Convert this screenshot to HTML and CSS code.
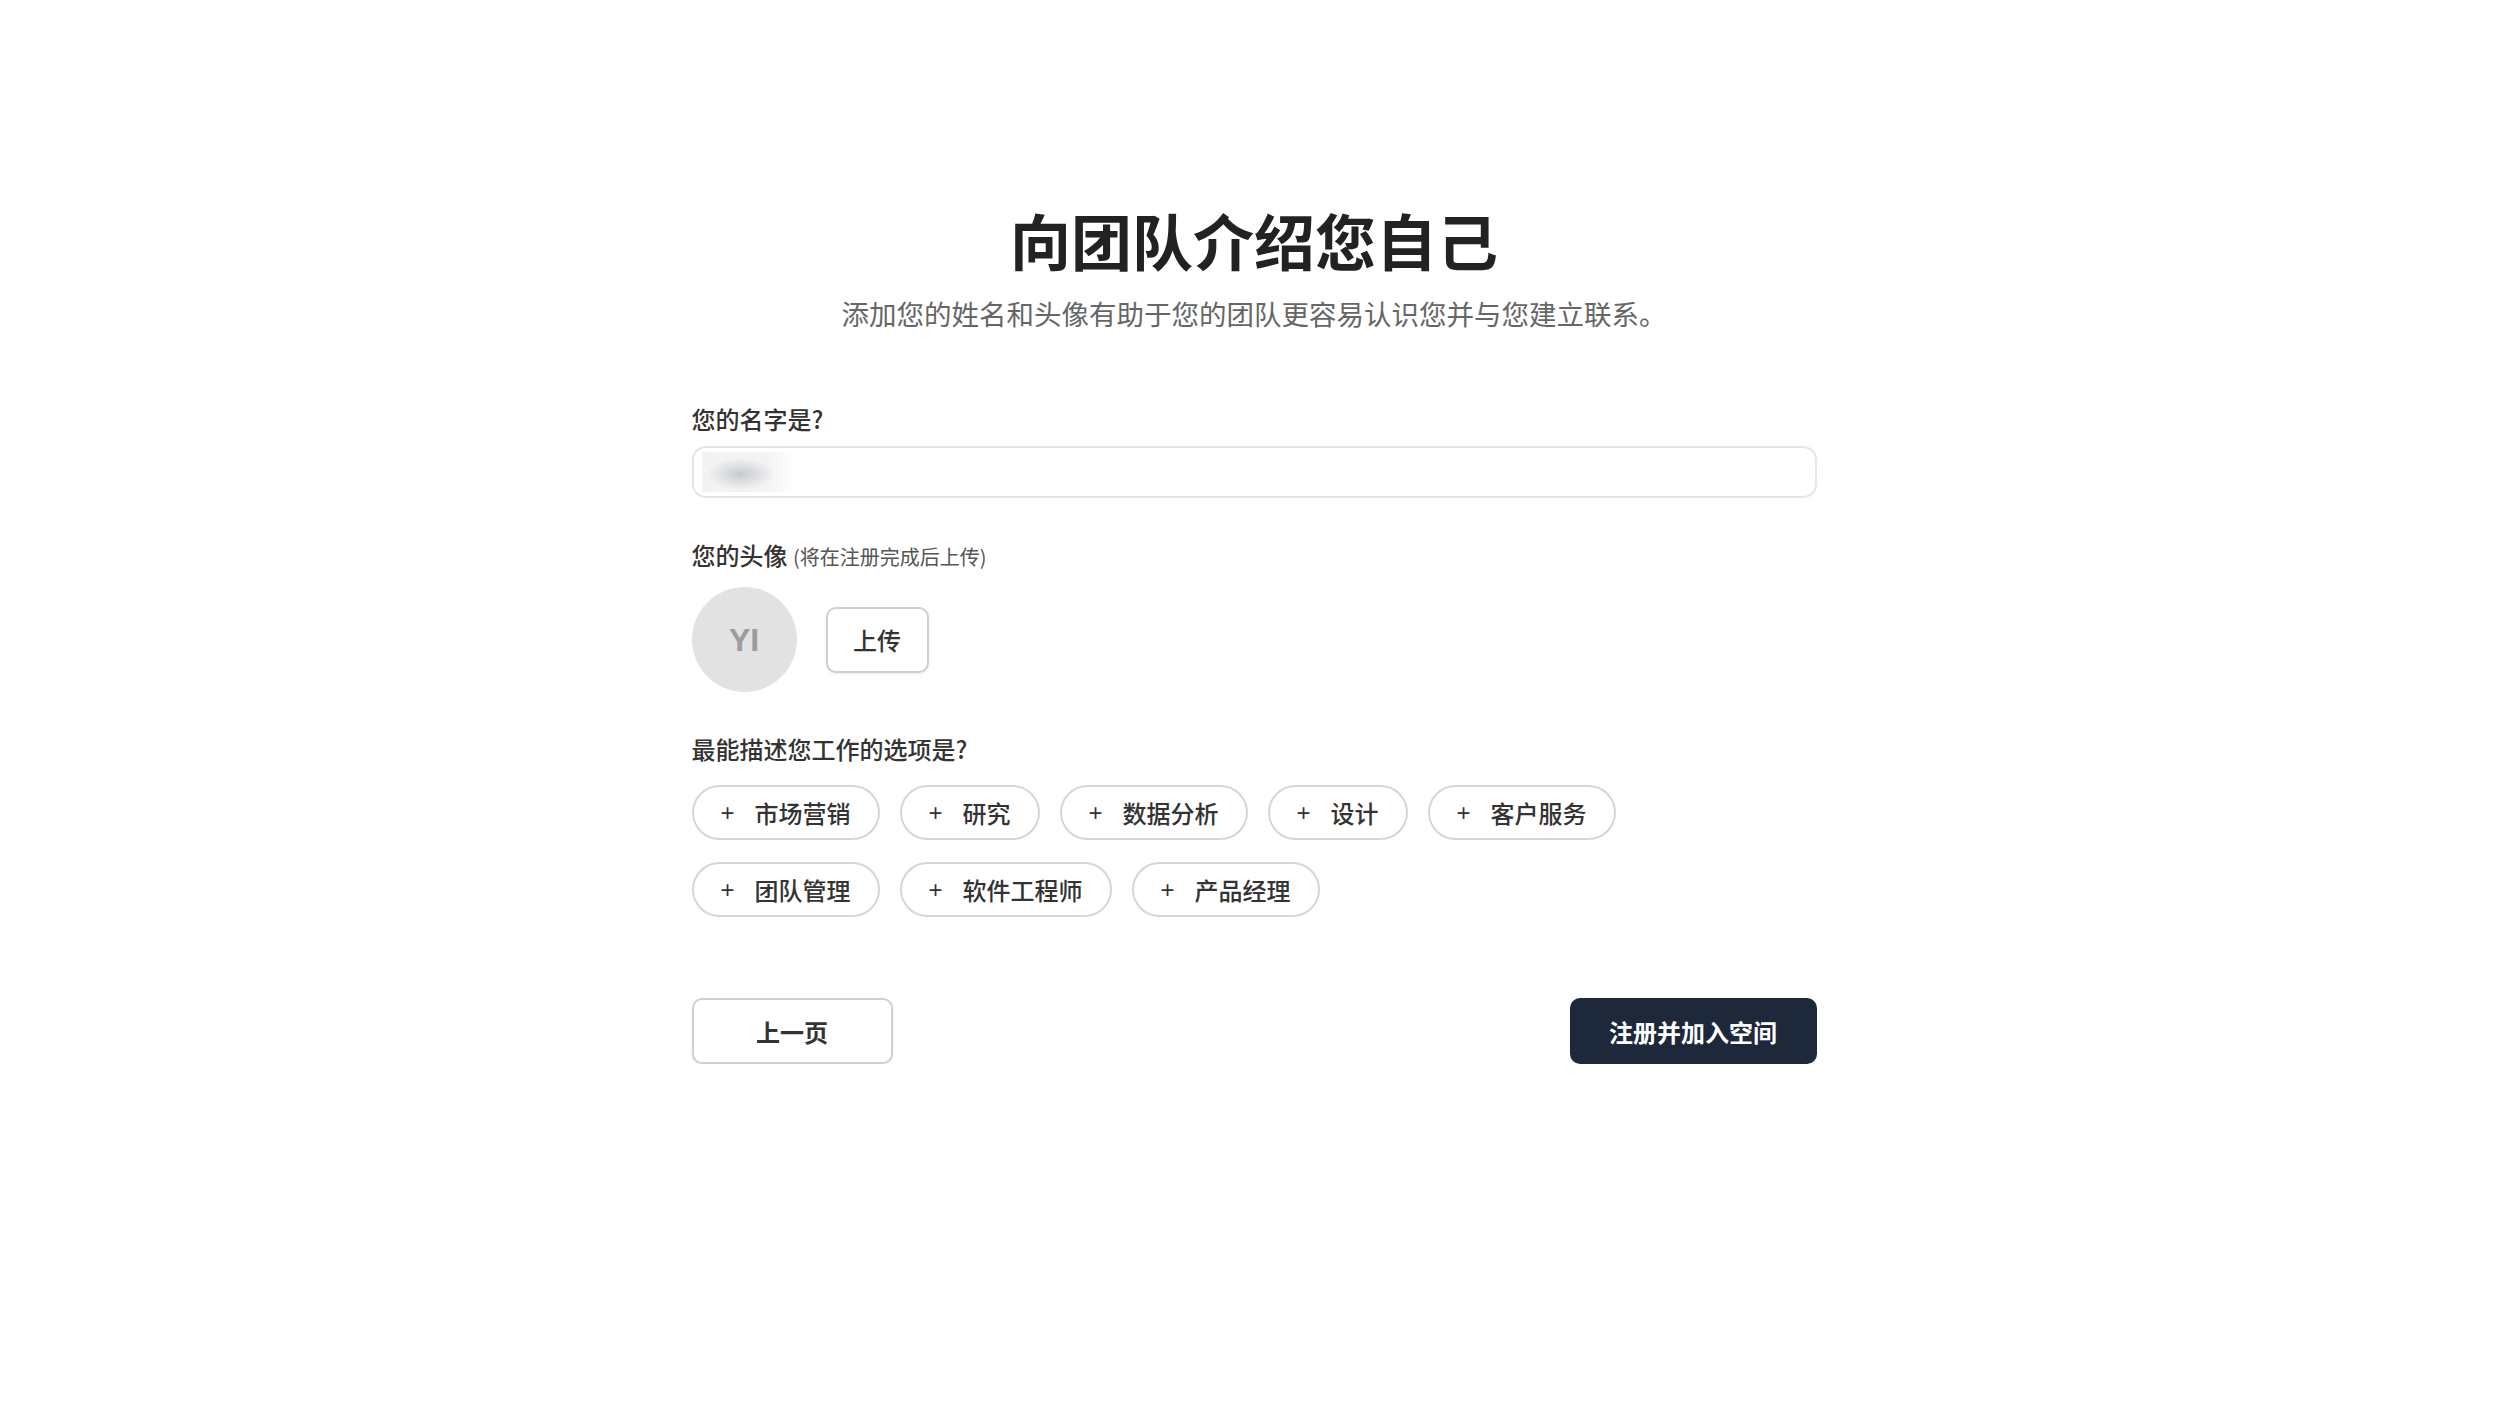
FILE: index.html
```html
<!DOCTYPE html>
<html lang="zh-CN">
<head>
    <meta charset="UTF-8">
    <meta name="viewport" content="width=device-width, initial-scale=1.0">
    <title>向团队介绍您自己</title>
    <link rel="stylesheet" href="styles.css">
</head>
<body>

    <main class="page">
        <h1 class="title">向团队介绍您自己</h1>
        <p class="subtitle">添加您的姓名和头像有助于您的团队更容易认识您并与您建立联系。</p>

        <form class="profile-form">
            <!-- Name (value is blurred for privacy) -->
            <label class="field-label">您的名字是?</label>
            <div class="text-input">
                <div class="blur-box"></div>
            </div>

            <!-- Avatar -->
            <label class="field-label avatar-label">您的头像 <span class="hint">(将在注册完成后上传)</span></label>
            <div class="avatar-row">
                <div class="avatar">YI</div>
                <button type="button" class="btn btn-outline upload-btn">上传</button>
            </div>

            <!-- Job role -->
            <label class="field-label role-label">最能描述您工作的选项是?</label>
            <div class="chip-list">
                <button type="button" class="chip"><span class="plus">+</span>市场营销</button>
                <button type="button" class="chip"><span class="plus">+</span>研究</button>
                <button type="button" class="chip"><span class="plus">+</span>数据分析</button>
                <button type="button" class="chip"><span class="plus">+</span>设计</button>
                <button type="button" class="chip"><span class="plus">+</span>客户服务</button>
                <button type="button" class="chip"><span class="plus">+</span>团队管理</button>
                <button type="button" class="chip"><span class="plus">+</span>软件工程师</button>
                <button type="button" class="chip"><span class="plus">+</span>产品经理</button>
            </div>

            <div class="actions">
                <button type="button" class="btn btn-outline prev-btn">上一页</button>
                <button type="button" class="btn btn-primary next-btn">注册并加入空间</button>
            </div>
        </form>
    </main>

</body>
</html>
```

FILE: styles.css
```css
/* General Page Styling */
body {
    font-family: "Noto Sans CJK SC", "Noto Sans", sans-serif;
    margin: 0;
    padding: 0;
    background: #FFFFFF;
    color: #333333;
}

/* Page wrapper */
.page {
    padding: 199px 7px 0 0;
    display: flex;
    flex-direction: column;
    align-items: center;
}

.title {
    margin: 0;
    font-size: 61px;
    line-height: 82px;
    font-weight: 700;
    color: #222222;
}

.subtitle {
    margin: 12px 0 0 0;
    font-size: 27.5px;
    line-height: 40px;
    color: #666666;
}

/* Form */
.profile-form {
    width: 1125px;
    margin-top: 69px;
    display: flex;
    flex-direction: column;
}

.field-label {
    font-size: 24px;
    line-height: 34px;
    font-weight: 500;
    color: #333333;
}

.hint {
    font-size: 20px;
    font-weight: 400;
    color: #555555;
}

.text-input {
    box-sizing: border-box;
    height: 52px;
    margin-top: 10px;
    border: 2px solid #E6E6E6;
    border-radius: 14px;
    display: flex;
    align-items: center;
    padding-left: 8px;
}

/* Blurred name value */
.blur-box {
    width: 92px;
    height: 40px;
    background:
        radial-gradient(ellipse 34px 16px at 42% 55%, rgba(196, 200, 205, 0.95), rgba(230, 232, 234, 0) 100%),
        linear-gradient(90deg, #F3F3F3 70%, #FFFFFF);
}

/* Avatar */
.avatar-label {
    margin-top: 40px;
}

.avatar-row {
    margin-top: 13px;
    display: flex;
    align-items: center;
    gap: 29px;
}

.avatar {
    width: 105px;
    height: 105px;
    border-radius: 50%;
    background-color: #E2E2E2;
    color: #9C9C9C;
    font-family: "Liberation Sans", sans-serif;
    font-size: 32px;
    font-weight: 700;
    display: flex;
    align-items: center;
    justify-content: center;
    padding-top: 2px;
    box-sizing: border-box;
}

/* Buttons */
.btn {
    box-sizing: border-box;
    height: 66px;
    font-family: inherit;
    font-size: 24px;
    border-radius: 10px;
    cursor: pointer;
}

.btn-outline {
    background: #FFFFFF;
    border: 2px solid #D0D0D0;
    color: #333333;
    box-shadow: 0 1px 3px rgba(0, 0, 0, 0.08);
}

.upload-btn {
    width: 103px;
    font-weight: 500;
}

/* Role chips */
.role-label {
    margin-top: 40px;
}

.chip-list {
    margin-top: 19px;
    display: flex;
    flex-wrap: wrap;
    column-gap: 20px;
    row-gap: 22px;
    max-width: 960px;
}

.chip {
    box-sizing: border-box;
    height: 55px;
    padding: 0 27px;
    border: 2px solid #D6D6D6;
    border-radius: 28px;
    background: #FFFFFF;
    font-family: inherit;
    font-size: 24px;
    font-weight: 500;
    color: #333333;
    display: flex;
    align-items: center;
    cursor: pointer;
}

.plus {
    font-family: "Liberation Sans", sans-serif;
    font-size: 24px;
    margin-right: 20px;
    color: #333333;
}

/* Bottom actions */
.actions {
    margin-top: 81px;
    display: flex;
    justify-content: space-between;
}

.prev-btn {
    width: 201px;
    font-weight: 700;
}

.btn-primary {
    background: #1E283B;
    border: none;
    color: #FFFFFF;
    font-weight: 700;
}

.next-btn {
    width: 247px;
}
```
